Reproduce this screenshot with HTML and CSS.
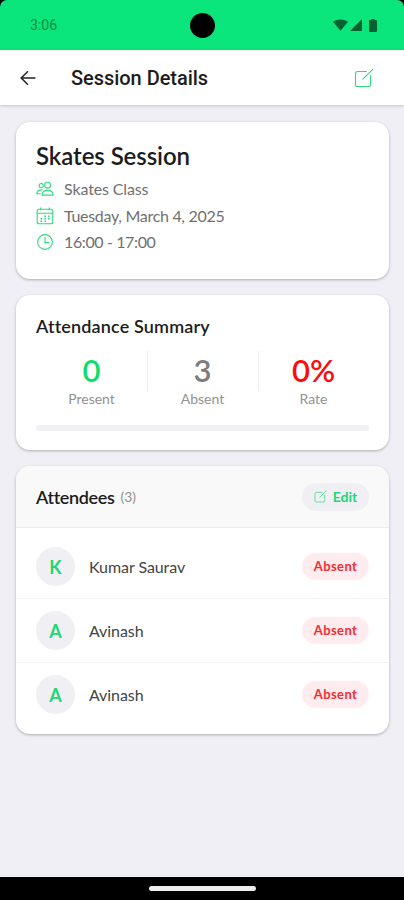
FILE: index.html
```html
<!DOCTYPE html>
<html lang="en">
<head>
  <meta charset="UTF-8">
  <meta name="viewport" content="width=device-width, initial-scale=1.0">
  <title>Session Details</title>
  <link rel="stylesheet" href="styles.css">
</head>
<body>
  <svg class="symbols">
    <symbol id="icon-edit" viewBox="0 0 20 20">
      <path d="M12.5 3.5H3.6Q1.5 3.5 1.5 5.6V16.4Q1.5 18.5 3.6 18.5H14.4Q16.5 18.5 16.5 16.4V8M8.8 11.2L18.7 1.3"/>
    </symbol>
  </svg>

  <div class="screen">
    <div class="status-bar">
      <span class="status-time">3:06</span>
      <span class="camera"></span>
      <div class="status-icons">
        <svg class="wifi" viewBox="0 0 16 12"><path d="M0 2.6Q8-2.4 16 2.6L8 12Z"/></svg>
        <svg class="signal" viewBox="0 0 12 12"><path d="M12 0V12H0Z"/></svg>
        <svg class="battery" viewBox="0 0 8 13"><path d="M2.3 0H5.7V1H7Q8 1 8 2V12Q8 13 7 13H1Q0 13 0 12V2Q0 1 1 1H2.3Z"/></svg>
      </div>
    </div>

    <header class="app-bar">
      <svg class="back" viewBox="0 0 16 16"><path d="M15.5 8H1.5M8 1.2L1.2 8L8 14.8"/></svg>
      <h1 class="app-title">Session Details</h1>
      <svg class="icon edit-icon"><use href="#icon-edit"/></svg>
    </header>

    <main class="content">
      <section class="card session">
        <h2 class="session-name">Skates Session</h2>
        <div class="info-row">
          <svg class="icon info-icon" viewBox="0 0 18 18">
            <circle cx="5.2" cy="5.6" r="2.1"/>
            <circle cx="11.6" cy="5.2" r="2.9"/>
            <path d="M6 15.1Q6.4 10.4 11.6 10.4T17.2 15.1ZM6 9.9Q1.2 9.6 .8 13.8H4.3"/>
          </svg>
          <span>Skates Class</span>
        </div>
        <div class="info-row">
          <svg class="icon info-icon" viewBox="0 0 18 18">
            <rect x="1.2" y="2.2" width="15.6" height="14.6" rx="2"/>
            <path d="M1.2 6.2H16.8M4.7 .8V2.8M13.3 .8V2.8"/>
            <path class="dots" d="M8.4 9.2H10M11.9 9.2H13.5M4.5 11.8H6.1M8.4 11.8H10M11.9 11.8H13.5M4.5 14.3H6.1M8.4 14.3H10"/>
          </svg>
          <span class="date">Tuesday, March 4, 2025</span>
        </div>
        <div class="info-row">
          <svg class="icon info-icon" viewBox="0 0 18 18">
            <circle cx="9" cy="9" r="7.4"/>
            <path d="M9 4.2V9.6H12.6"/>
          </svg>
          <span class="time">16:00 - 17:00</span>
        </div>
      </section>

      <section class="card summary">
        <h3 class="section-title summary-title">Attendance Summary</h3>
        <div class="stats">
          <div class="stat">
            <span class="stat-value present">0</span>
            <span class="stat-label">Present</span>
          </div>
          <div class="stat">
            <span class="stat-value absent">3</span>
            <span class="stat-label">Absent</span>
          </div>
          <div class="stat">
            <span class="stat-value rate">0%</span>
            <span class="stat-label">Rate</span>
          </div>
        </div>
        <div class="progress"></div>
      </section>

      <section class="card attendees">
        <div class="attendees-header">
          <h3 class="section-title attendees-title">Attendees</h3>
          <span class="count">(3)</span>
          <div class="edit-button">
            <svg class="icon"><use href="#icon-edit"/></svg>
            <span>Edit</span>
          </div>
        </div>
        <div class="attendee-list">
          <div class="attendee">
            <span class="avatar">K</span>
            <span class="attendee-name">Kumar Saurav</span>
            <span class="badge">Absent</span>
          </div>
          <div class="attendee">
            <span class="avatar">A</span>
            <span class="attendee-name">Avinash</span>
            <span class="badge">Absent</span>
          </div>
          <div class="attendee">
            <span class="avatar">A</span>
            <span class="attendee-name">Avinash</span>
            <span class="badge">Absent</span>
          </div>
        </div>
      </section>
    </main>

    <div class="gesture-bar"><span class="gesture-handle"></span></div>
  </div>
</body>
</html>
```

FILE: styles.css
```css
* {
  box-sizing: border-box;
}

body {
  margin: 0;
  background-color: #000;
  font-family: Lato, sans-serif;
  font-variant-ligatures: none;
  color: #1c1c1c;
}

h1, h2, h3 {
  margin: 0;
}

svg {
  display: block;
  flex-shrink: 0;
}

.symbols {
  position: absolute;
  width: 0;
  height: 0;
}

.screen {
  height: 900px;
  display: flex;
  flex-direction: column;
}

.status-bar {
  height: 50px;
  padding: 0 27px 0 30px;
  display: grid;
  grid-template-columns: 1fr 25px 1fr;
  align-items: center;
  background-color: #0ae67b;
  border-radius: 7px 7px 0 0;
}

.status-time {
  font: 14px Roboto, sans-serif;
  color: #078a45;
}

.camera {
  width: 25px;
  height: 25px;
  margin-left: -1px;
  border-radius: 50%;
  background-color: #000;
}

.status-icons {
  display: flex;
  align-items: center;
  justify-content: flex-end;
  fill: #07602f;
}

.wifi {
  width: 15px;
  height: 12px;
}

.signal {
  width: 12px;
  height: 12px;
  margin: 0 7px 0 2px;
}

.battery {
  width: 8px;
  height: 13px;
}

.app-bar {
  height: 55px;
  padding: 1px 30px 0 20px;
  display: flex;
  align-items: center;
  background-color: #fff;
  box-shadow: 0 1px 3px rgba(0, 0, 0, 0.18);
  z-index: 1;
}

.back {
  width: 16px;
  height: 16px;
  margin-right: 35px;
  fill: none;
  stroke: #222;
  stroke-width: 1.5;
}

.app-title {
  flex: 1;
  font: 500 20px Roboto, sans-serif;
  letter-spacing: -0.04px;
}

.icon {
  fill: none;
  stroke: #2edb7e;
  stroke-width: 1.1;
  stroke-linecap: round;
  stroke-linejoin: round;
}

.edit-icon {
  width: 20px;
  height: 20px;
}

.content {
  flex: 1;
  padding: 17px 15px 0 16px;
  display: flex;
  flex-direction: column;
  gap: 16px;
  background-color: #f0eff5;
}

.card {
  background-color: #fff;
  border-radius: 14px;
  box-shadow: 0 1px 3px rgba(0, 0, 0, 0.28);
}

.session {
  height: 157px;
  padding: 18px 20px 0;
}

.session-name {
  margin-bottom: 6px;
  font-size: 24px;
  font-weight: 600;
  line-height: 31px;
  letter-spacing: -0.08px;
}

.info-row {
  height: 26.5px;
  display: flex;
  align-items: center;
  gap: 10px;
  font-size: 16px;
  line-height: 22px;
  letter-spacing: -0.13px;
  color: #707070;
}

.info-row span {
  margin-top: -2px;
}

.info-row .date {
  letter-spacing: -0.3px;
}

.info-row .time {
  letter-spacing: -0.38px;
}

.info-icon {
  width: 18px;
  height: 18px;
  margin-top: -2px;
}

.dots {
  stroke-width: 1.5;
  stroke-linecap: butt;
}

.summary {
  height: 155px;
  padding: 20px 20px 0;
}

.section-title {
  font-size: 18px;
  font-weight: 600;
  line-height: 22px;
}

.summary-title {
  letter-spacing: 0.15px;
}

.stats {
  margin-top: 14px;
  display: grid;
  grid-template-columns: repeat(3, 1fr);
  background:
    linear-gradient(#ededf0, #ededf0) 33.4% 0 / 1px 40px no-repeat,
    linear-gradient(#ededf0, #ededf0) 66.8% 0 / 1px 40px no-repeat;
}

.stat {
  display: flex;
  flex-direction: column;
  align-items: center;
}

.stat-value {
  font-size: 31px;
  font-weight: 600;
  line-height: 39px;
}

.stat-label {
  font-size: 14px;
  line-height: 18px;
  color: #929292;
}

.present {
  color: #0edc6b;
}

.absent {
  color: #7c7c7c;
}

.rate {
  color: #fc0d0d;
}

.progress {
  height: 6px;
  margin-top: 17px;
  border-radius: 3px;
  background-color: #f0f0f5;
}

.attendees {
  height: 268px;
  overflow: hidden;
}

.attendees-header {
  height: 62px;
  padding: 0 20px;
  display: flex;
  align-items: center;
  background-color: #f9f9f9;
  border-bottom: 1px solid #ebebed;
}

.attendees-title {
  letter-spacing: -0.35px;
}

.count {
  margin-left: 6px;
  font-size: 14px;
  letter-spacing: -0.1px;
  color: #929292;
}

.edit-button {
  width: 67px;
  height: 28px;
  margin-left: auto;
  display: flex;
  align-items: center;
  justify-content: center;
  gap: 6px;
  border-radius: 14px;
  background-color: #f0f0f4;
  color: #20d774;
  font-size: 14px;
  font-weight: 700;
}

.edit-button .icon {
  width: 13px;
  height: 13px;
}

.attendee-list {
  padding-top: 7px;
}

.attendee {
  height: 64px;
  padding: 0 20px;
  display: flex;
  align-items: center;
  border-bottom: 1px solid #f3f3f5;
}

.attendee:last-child {
  border-bottom: none;
  height: 63px;
}

.avatar {
  width: 39px;
  height: 39px;
  margin-right: 14px;
  border-radius: 50%;
  background-color: #f0f0f4;
  color: #20d774;
  font-size: 18px;
  font-weight: 700;
  line-height: 40px;
  text-align: center;
}

.attendee-name {
  font-size: 16px;
  letter-spacing: -0.07px;
  color: #444;
}

.badge {
  width: 67px;
  height: 27px;
  margin-left: auto;
  border-radius: 14px;
  background-color: #ffecee;
  color: #f52c30;
  font-size: 13px;
  font-weight: 700;
  line-height: 27px;
  letter-spacing: 0.4px;
  text-align: center;
}

.gesture-bar {
  height: 23px;
  display: flex;
  align-items: center;
  justify-content: center;
  background-color: #000;
}

.gesture-handle {
  width: 107px;
  height: 5px;
  border-radius: 3px;
  background-color: #eee;
}
```
